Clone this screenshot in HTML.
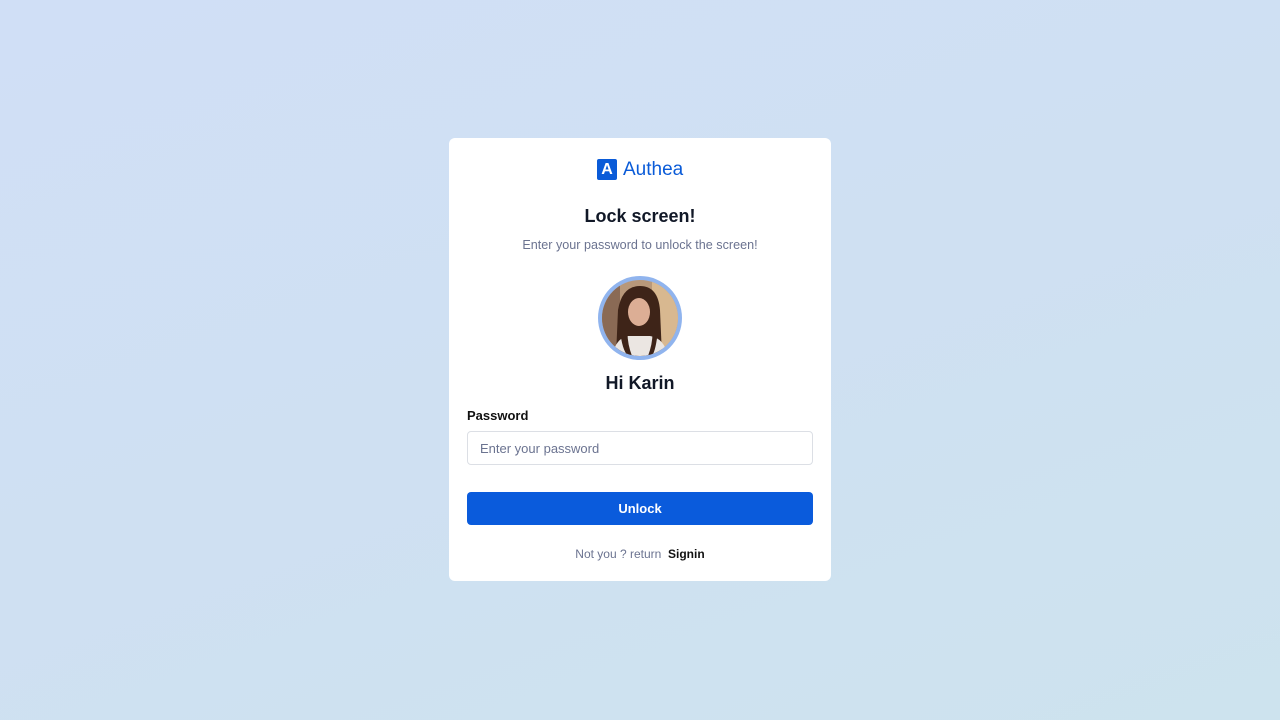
<!DOCTYPE html>
<html><head><style>
*{box-sizing:border-box;margin:0;padding:0}
body{width:1280px;height:720px;overflow:hidden;font-family:"Liberation Sans",sans-serif;background:linear-gradient(160deg,#d0dff6 0%,#cfe0f2 50%,#cde3ee 100%);position:relative}
.card{position:absolute;left:449px;top:138px;width:382px;height:443px;background:#fff;border-radius:6px}
.c{position:absolute;left:0;width:100%;text-align:center}
.logo{top:158px;left:597px;position:absolute;display:flex;align-items:center}
.lb{width:20px;height:21px;background:#0a5bd8;border-radius:2px;color:#fff;font-weight:bold;font-size:16px;text-align:center;line-height:21px}
.lt{color:#0a5bd8;font-size:19px;margin-left:6px;line-height:22px;padding-top:1px}
h1{font-size:18px;font-weight:bold;color:#111827}
.sub{font-size:12.6px;color:#6b7390}
.av{position:absolute;left:598px;top:276px;width:84px;height:84px;border-radius:50%;background:#90b4ee;padding:4px}
.av svg{display:block;border-radius:50%}
</style></head><body>
<div class="card"></div>
<div class="logo"><div class="lb">A</div><div class="lt">Authea</div></div>
<div class="c" style="top:206px"><h1>Lock screen!</h1></div>
<div class="c sub" style="top:238px">Enter your password to unlock the screen!</div>
<div class="av"><svg width="76" height="76" viewBox="0 0 76 76">
<rect width="76" height="76" fill="#b8987a"/>
<rect x="50" y="0" width="26" height="76" fill="#d8b890"/>
<rect x="0" y="0" width="18" height="76" fill="#8a6a55"/>
<path d="M14 76 L16 30 Q20 6 38 6 Q56 6 58 30 L60 76 Z" fill="#3e2418"/>
<ellipse cx="37" cy="32" rx="11" ry="14" fill="#dcae95"/>
<path d="M10 76 Q14 58 26 56 L48 56 Q62 58 66 76 Z" fill="#ebe6e2"/>
<path d="M18 50 Q20 70 26 76 L30 76 Q24 60 26 46 Z M56 50 Q54 70 50 76 L46 76 Q52 60 50 46 Z" fill="#3e2418"/>
</svg></div>
<div class="c" style="top:373px;font-size:18px;font-weight:bold;color:#111827">Hi Karin</div>
<div style="position:absolute;left:467px;top:408px;font-size:13px;font-weight:bold;color:#111">Password</div>
<div style="position:absolute;left:467px;top:431px;width:346px;height:34px;border:1px solid #dcdfe5;border-radius:4px;font-size:13px;color:#6b7390;padding:9px 12px">Enter your password</div>
<div style="position:absolute;left:467px;top:492px;width:346px;height:33px;background:#0a5bdc;border-radius:4px;color:#fff;font-weight:bold;font-size:13px;text-align:center;line-height:33px">Unlock</div>
<div class="c" style="top:547px;font-size:12px;color:#6b7390">Not you ? return &nbsp;<b style="color:#111">Signin</b></div>
</body></html>
